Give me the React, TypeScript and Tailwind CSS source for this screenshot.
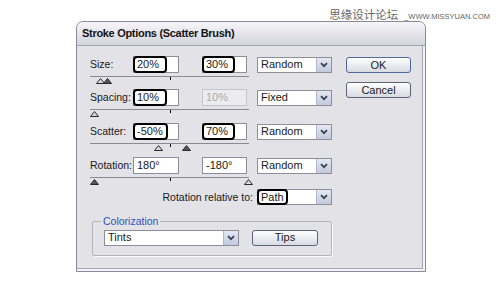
import React from "react";

const ui = "font-['Liberation_Sans',Arial,sans-serif] text-[10px] text-[#1a1a1a]";

function Tri({ x, dark }: { x: number; dark?: boolean }) {
  // slider thumb, placed over the slider track
  return (
    <svg
      width="9"
      height="6"
      viewBox="0 0 9 6"
      className="absolute top-[1px]"
      style={{ left: x - 4 }}
    >
      <polygon
        points="4.5,0.5 8.5,5.5 0.5,5.5"
        fill={dark ? "#555" : "#d8d8dc"}
        stroke="#2a2a2a"
        strokeWidth="1"
      />
    </svg>
  );
}

function Field({
  value,
  mark,
  wide,
  disabled,
}: {
  value: string;
  mark?: string;
  wide?: boolean;
  disabled?: boolean;
}) {
  return (
    <div
      className={`relative h-[17px] border ${wide ? "w-[46px]" : "w-[45px]"} ${
        disabled ? "bg-[#ececf0] border-[#c4c4cc] text-[#a8a8b0]" : "bg-white border-[#8e8e98]"
      } flex items-center pl-[3px] leading-none text-[11px]`}
    >
      {mark ? (
        <span
          className={`absolute -left-px -top-px h-[17px] ${mark} border-2 border-black rounded-[4px] bg-white flex items-center pl-[2px]`}
        >
          {value}
        </span>
      ) : (
        value
      )}
    </div>
  );
}

function Chevron() {
  return (
    <svg width="8" height="6" viewBox="0 0 8 6">
      <path d="M1 1.2 L4 4.2 L7 1.2" fill="none" stroke="#3c4050" strokeWidth="1.8" />
    </svg>
  );
}

function Select({ value, w, mark }: { value: string; w: string; mark?: boolean }) {
  return (
    <div className={`relative h-[16px] ${w} bg-white border border-[#8e8e98] flex items-stretch text-[11px]`}>
      {mark ? (
        <span className="absolute -left-px -top-px h-[16px] w-[31px] border-2 border-black rounded-[4px] bg-white flex items-center pl-[2px] leading-none">
          {value}
        </span>
      ) : (
        <span className="flex-1 flex items-center pl-[3px] leading-none">{value}</span>
      )}
      <span className="ml-auto w-[15px] bg-linear-to-b from-[#e4e8f2] to-[#c3cade] border-l border-[#b0b6c8] flex items-center justify-center">
        <Chevron />
      </span>
    </div>
  );
}

function Button({ label, def, w }: { label: string; def?: boolean; w: string }) {
  return (
    <div
      className={`h-[16px] ${w} rounded-[3px] border ${
        def ? "border-[#4c6a9c]" : "border-[#5c6478]"
      } bg-linear-to-b from-white to-[#d8dae4] flex items-center justify-center leading-none text-[11px]`}
    >
      {label}
    </div>
  );
}

function SliderRow({
  label,
  a,
  b,
  markA,
  markB,
  disabledB,
  select,
  thumbs,
  h,
}: {
  label: string;
  a: string;
  b: string;
  markA?: string;
  markB?: string;
  disabledB?: boolean;
  select: string;
  thumbs: { x: number; dark?: boolean }[];
  h: string;
}) {
  return (
    <div className={h}>
      <div className="flex items-center h-[17px]">
        <span className="w-[43px] leading-none text-[10.5px]">{label}</span>
        <Field value={a} mark={markA} wide />
        <span className="w-[23px]" />
        <Field value={b} mark={markB} disabled={disabledB} />
        <span className="w-[10px]" />
        <Select value={select} w="w-[75px]" />
      </div>
      <div className="relative mt-[3px] w-[159px] h-[8px] border-t border-[#8a8a94]">
        <span className="absolute left-[80px] top-0 w-px h-[3px] bg-black" />
        {thumbs.map((t, i) => (
          <Tri key={i} x={t.x} dark={t.dark} />
        ))}
      </div>
    </div>
  );
}

export default function App() {
  return (
    <div className={`w-[500px] h-[291px] bg-white ${ui}`}>
      {/* watermark */}
      <div className="h-[21px] flex items-end justify-end pr-[10px] pb-[1px] text-[#666]">
        <span className="font-['Noto_Sans_CJK_SC',sans-serif] text-[11.5px] leading-none">思缘设计论坛</span>
        <span className="ml-[6px] text-[7.5px] leading-none">_WWW.MISSYUAN.COM</span>
      </div>

      {/* dialog */}
      <div className="ml-[76px] w-[350px] h-[251px] rounded-t-[7px] border border-[#8a8a9c] bg-[#e2e2e7] overflow-hidden shadow-[inset_-2px_-2px_0_#f4f4f6,inset_-3px_-3px_0_#a6a6b2]">
        <div className="h-[24px] bg-linear-to-b from-[#f6f6f9] to-[#d4d4dc] border-b border-[#a4a4b4] flex items-center pl-[5px]">
          <span className="font-bold text-[11px] tracking-[-0.3px] text-[#141414]">
            Stroke Options (Scatter Brush)
          </span>
        </div>

        <div className="flex pl-[13px] pt-[10px]">
          <div className="w-[242px]">
            <SliderRow
              label="Size:"
              a="20%"
              b="30%"
              markA="w-[34px]"
              markB="w-[33px]"
              select="Random"
              thumbs={[{ x: 10 }, { x: 17, dark: true }]}
              h="h-[33px]"
            />
            <SliderRow
              label="Spacing:"
              a="10%"
              b="10%"
              markA="w-[34px]"
              disabledB
              select="Fixed"
              thumbs={[{ x: 4 }]}
              h="h-[34px]"
            />
            <SliderRow
              label="Scatter:"
              a="-50%"
              b="70%"
              markA="w-[35px]"
              markB="w-[33px]"
              select="Random"
              thumbs={[{ x: 68 }, { x: 96, dark: true }]}
              h="h-[34px]"
            />
            <SliderRow
              label="Rotation:"
              a="180°"
              b="-180°"
              select="Random"
              thumbs={[{ x: 4, dark: true }, { x: 158 }]}
              h="h-[32px]"
            />

            <div className="flex items-center justify-end gap-[4px] h-[16px]">
              <span className="leading-none text-[10.5px]">Rotation relative to:</span>
              <Select value="Path" w="w-[75px]" mark />
            </div>

            <fieldset className="mt-[11px] ml-[2px] w-[240px] h-[40px] border border-[#b4b4be] rounded-[2px] shadow-[1px_1px_0_#fafafa]">
              <legend className="ml-[8px] px-[2px] text-[#3050c0] leading-none text-[10.5px]">Colorization</legend>
              <div className="flex items-center pl-[11px] pt-[3px]">
                <Select value="Tints" w="w-[135px]" />
                <span className="w-[13px]" />
                <Button label="Tips" w="w-[66px]" />
              </div>
            </fieldset>
          </div>

          <div className="ml-[14px] pt-[1px] flex flex-col gap-[9px]">
            <Button label="OK" def w="w-[65px]" />
            <Button label="Cancel" w="w-[65px]" />
          </div>
        </div>
      </div>
    </div>
  );
}
